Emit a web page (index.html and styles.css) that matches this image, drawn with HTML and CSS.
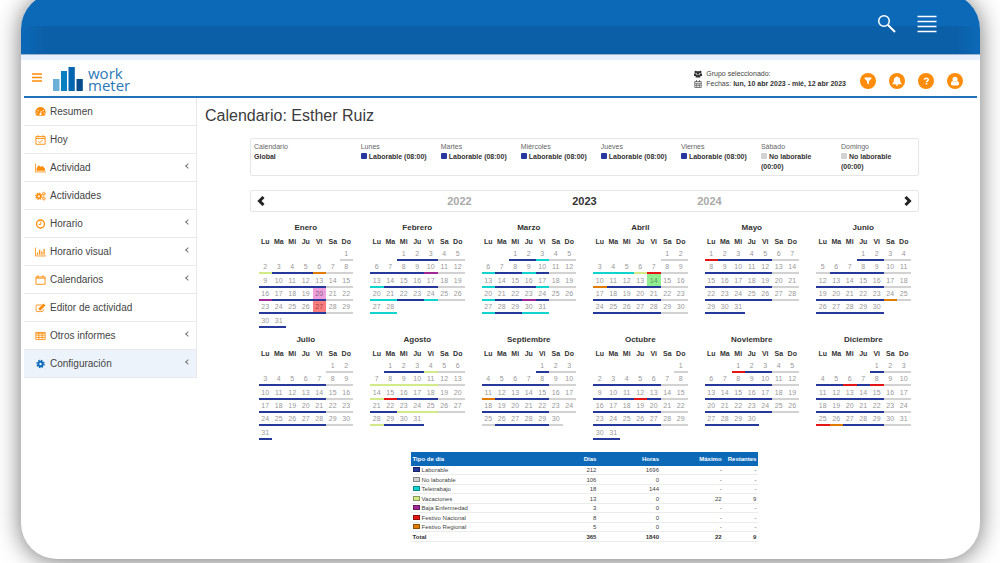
FILE: index.html
```html
<!DOCTYPE html>
<html lang="es">
<head>
<meta charset="utf-8">
<meta name="viewport" content="width=device-width, initial-scale=1">
<title>Calendario: Esther Ruiz</title>
<link rel="stylesheet" href="styles.css">
</head>
<body>
<div class="frame">
  <div class="topbar">
    <button class="top-btn" type="button" aria-label="Buscar"><svg width="20" height="20" viewBox="0 0 20 20" fill="none" stroke="#fff"><circle cx="7" cy="7" r="5.3" stroke-width="1.5"/><path d="M11 11l7 7" stroke-width="2"/></svg></button>
    <button class="top-btn" type="button" aria-label="Menú"><svg width="20" height="20" viewBox="0 0 20 20" stroke="#fff" stroke-width="1.4"><path d="M.5 2.5h19M.5 7.5h19M.5 12.5h19M.5 17.5h19"/></svg></button>
  </div>
  <div class="strip"></div>
  <div class="app">
    <header class="header">
      <button class="burger" type="button" aria-label="Mostrar menú"><svg width="10" height="9" viewBox="0 0 10 9" stroke="#ff8c0a" stroke-width="1.3"><path d="M0 1h10M0 4.500h10M0 8h10"/></svg></button>
      <a class="logo" href="#">
        <svg width="30" height="24" viewBox="0 0 30 24"><path fill="#6bb0d6" d="M0 12h6.500v12H0z"/><path fill="#077fc0" d="M8 4h6v20H8z"/><path fill="#0465b0" d="M15.500 0h6.300v24h-6.300z"/><path fill="#064b8b" d="M23.500 12h6.300v12h-6.300z"/></svg>
        <span class="logo-text"><span>work</span><span>meter</span></span>
      </a>
      <div class="context">
        <div class="context-line"><svg width="8" height="8" viewBox="0 0 16 16" fill="#333"><circle cx="3.500" cy="4" r="2.500"/><circle cx="12.500" cy="4" r="2.500"/><circle cx="8" cy="5.500" r="3.300"/><path d="M0 7h4l1 3-2 2H0zM16 7h-4l-1 3 2 2h3zM3 15c0-4 1.500-6 5-6s5 2 5 6z"/></svg><span>Grupo seleccionado:</span></div>
        <div class="context-line"><svg width="8" height="8" viewBox="0 0 16 16" fill="none" stroke="#555" stroke-width="1.500"><path d="M1.500 3h13v12h-13zM1.500 6.500h13M5 0v4M11 0v4M5.500 6.500V15M10.500 6.500V15M1.500 10.500h13"/></svg><span>Fechas: <b>lun, 10 abr 2023 - mié, 12 abr 2023</b></span></div>
      </div>
      <div class="actions">
        <button type="button" aria-label="Filtro"><svg width="8" height="8" viewBox="0 0 16 16" fill="#fff"><path d="M1 1h14v2l-5 5v7l-4-3V8L1 3z"/></svg></button>
        <button type="button" aria-label="Avisos"><svg width="10" height="10" viewBox="0 0 16 16" fill="#fff"><path d="M7 1.500a1 1 0 012 0c3 .5 4 2.500 4 5 0 3 1 4.500 2.500 5.500v1H.5v-1C2 11 3 9.500 3 6.500c0-2.500 1-4.500 4-5zM6 13.500h4a2 2 0 01-4 0z"/></svg></button>
        <button type="button" aria-label="Ayuda"><svg width="7" height="8" viewBox="0 0 12 16" fill="none" stroke="#fff" stroke-width="3"><path d="M2 5.500C2 3 4 2.500 6 2.500s3.500 1 3.500 3c0 2.500-3.500 2-3.500 5M6 12v3"/></svg></button>
        <button type="button" aria-label="Usuario"><svg width="10" height="10" viewBox="0 0 16 16" fill="#fff"><circle cx="8" cy="5" r="4"/><path d="M1.500 12.500C1.500 9.500 3 8 4.500 8 6.500 10 9.500 10 11.500 8c1.500 0 3 1.500 3 4.500 0 1.500-1 2.500-2.500 2.500H4c-1.500 0-2.500-1-2.500-2.500z"/></svg></button>
      </div>
    </header>
    <div class="body">
      <nav class="sidebar">
        <a href="#"><svg viewBox="0 0 20 16"><path fill="#ff8c0a" d="M3 15a9.500 9.500 0 1114 0z"/><path stroke="#fff" stroke-width="1.500" d="M10 12l1.500-6"/><g fill="#fff"><circle cx="10" cy="12" r="2"/><circle cx="3.500" cy="10" r="1.200"/><circle cx="5.500" cy="5.500" r="1.200"/><circle cx="15" cy="5.500" r="1.200"/><circle cx="16.500" cy="10" r="1.200"/></g></svg><span>Resumen</span></a>
        <a href="#"><svg viewBox="1 0 18 16"><path class="line" d="M2.500 2.500h15v12.500h-15zM2.500 5.500h15M6 0v3.500M14 0v3.500M6.500 10l2.500 2.500 4.500-4.500"/></svg><span>Hoy</span></a>
        <a href="#"><svg viewBox="0 0 20 16"><path class="line" d="M.8 0v15.200H20"/><path fill="#ff8c0a" d="M3 13V8l4-5 4 3 2-2 5 5v4z"/></svg><span>Actividad</span><i class="chevron"></i></a>
        <a href="#"><svg viewBox="0 0 20 16" fill="none" stroke="#ff8c0a"><circle cx="7" cy="8.500" r="3.500" stroke-width="3"/><circle cx="7" cy="8.500" r="5.700" stroke-width="2" stroke-dasharray="2.480 2"/><circle cx="16" cy="4" r="2" stroke-width="1.600"/><circle cx="16" cy="4" r="3.200" stroke-width="1.200" stroke-dasharray="1.300 1.200"/><circle cx="16" cy="12.500" r="2" stroke-width="1.600"/><circle cx="16" cy="12.500" r="3.200" stroke-width="1.200" stroke-dasharray="1.300 1.200"/></svg><span>Actividades</span></a>
        <a href="#"><svg viewBox="1 0 18 16"><circle class="line thick" cx="10" cy="8" r="6.500"/><path class="line" d="M10.500 4v4.700H7"/></svg><span>Horario</span><i class="chevron"></i></a>
        <a href="#"><svg viewBox="0 0 20 16"><path class="line" d="M.8 0v15.200H20"/><path class="line thick" d="M4.500 13V9M8.500 13V4M12.500 13V7M16.500 13V2.500"/></svg><span>Horario visual</span><i class="chevron"></i></a>
        <a href="#"><svg viewBox="1 0 18 16"><path class="line" d="M2.500 3h15v12h-15zM2.500 5h15M6 0v4M14 0v4"/></svg><span>Calendarios</span><i class="chevron"></i></a>
        <a href="#"><svg viewBox="0 0 20 16"><path class="line" d="M13 2.500H3.500c-1 0-1.500.5-1.500 1.500v9c0 1 .5 1.500 1.500 1.500h10c1 0 1.500-.5 1.500-1.500v-3"/><path fill="#ff8c0a" d="M7 8.500L15.500 0 19 3.500 10.500 12H7z"/></svg><span>Editor de actividad</span></a>
        <a href="#"><svg viewBox="0 0 20 16"><path class="line" d="M1.500 1.500h17v13h-17zM1.500 3h17M1.500 6.500h17M1.500 10.500h17M7 2v12.500M13 2v12.500"/></svg><span>Otros informes</span><i class="chevron"></i></a>
        <a href="#" class="active"><svg viewBox="0 0 20 16" fill="none" stroke="#0c69b8"><circle cx="10" cy="8" r="4" stroke-width="3.600"/><circle cx="10" cy="8" r="6.500" stroke-width="2.500" stroke-dasharray="2.800 2.305"/></svg><span>Configuración</span><i class="chevron"></i></a>
      </nav>
      <main class="main">
        <h1>Calendario: Esther Ruiz</h1>
        <div class="content">
          <dl class="week">
            <div><dt>Calendario</dt><dd>Global</dd></div>
            <div><dt>Lunes</dt><dd><i class="dot work"></i>Laborable (08:00)</dd></div>
            <div><dt>Martes</dt><dd><i class="dot work"></i>Laborable (08:00)</dd></div>
            <div><dt>Miércoles</dt><dd><i class="dot work"></i>Laborable (08:00)</dd></div>
            <div><dt>Jueves</dt><dd><i class="dot work"></i>Laborable (08:00)</dd></div>
            <div><dt>Viernes</dt><dd><i class="dot work"></i>Laborable (08:00)</dd></div>
            <div><dt>Sábado</dt><dd><i class="dot off"></i>No laborable (00:00)</dd></div>
            <div><dt>Domingo</dt><dd><i class="dot off"></i>No laborable (00:00)</dd></div>
          </dl>
          <div class="years">
            <button class="arrow" type="button" aria-label="Año anterior"><svg width="8" height="10" viewBox="0 0 8 10" fill="none" stroke="#222" stroke-width="3"><path d="M6.500 1L2.500 5l4 4"/></svg></button>
            <div class="year-list"><button type="button">2022</button><button type="button" class="current">2023</button><button type="button">2024</button></div>
            <button class="arrow" type="button" aria-label="Año siguiente"><svg width="8" height="10" viewBox="0 0 8 10" fill="none" stroke="#222" stroke-width="3"><path d="M1.500 1l4 4-4 4"/></svg></button>
          </div>
          <div class="months" id="months"></div>
          <table class="summary">
            <thead><tr><th>Tipo de día</th><th>Días</th><th>Horas</th><th>Máximo</th><th>Restantes</th></tr></thead>
            <tbody>
              <tr><td><i class="key work"></i>Laborable</td><td>212</td><td>1696</td><td>-</td><td>-</td></tr>
              <tr><td><i class="key off"></i>No laborable</td><td>106</td><td>0</td><td>-</td><td>-</td></tr>
              <tr><td><i class="key remote"></i>Teletrabajo</td><td>18</td><td>144</td><td>-</td><td>-</td></tr>
              <tr><td><i class="key holiday"></i>Vacaciones</td><td>13</td><td>0</td><td>22</td><td>9</td></tr>
              <tr><td><i class="key sick"></i>Baja Enfermedad</td><td>3</td><td>0</td><td>-</td><td>-</td></tr>
              <tr><td><i class="key national"></i>Festivo Nacional</td><td>8</td><td>0</td><td>-</td><td>-</td></tr>
              <tr><td><i class="key regional"></i>Festivo Regional</td><td>5</td><td>0</td><td>-</td><td>-</td></tr>
              <tr class="total"><td>Total</td><td>365</td><td>1840</td><td>22</td><td>9</td></tr>
            </tbody>
          </table>
        </div>
      </main>
    </div>
  </div>
</div>
<script src="calendar.js"></script>
</body>
</html>
```
FILE: calendar.js
```js
const YEAR = 2023;
const DAYS = ['Lu', 'Ma', 'Mi', 'Ju', 'Vi', 'Sa', 'Do'];
const MONTHS = [
  ['Enero', { holiday: [2], regional: [6], sick: [16] }, { 20: 'pink', 27: 'red' }],
  ['Febrero', { sick: [10], remote: [13, 20, 21, 24, 27, 28] }],
  ['Marzo', { remote: [3, 6, 9, 13, 17, 20, 27, 30, 31], sick: [23] }],
  ['Abril', { remote: [3, 4, 5], holiday: [6], national: [7], regional: [10] }, { 14: 'green' }],
  ['Mayo', { national: [1] }],
  ['Junio', { off: [5], regional: [24] }],
  ['Julio', {}],
  ['Agosto', { holiday: [4, 7, 8, 9, 10, 11, 14, 23, 24, 25, 28], national: [15] }],
  ['Septiembre', { regional: [11], off: [25] }],
  ['Octubre', { national: [12] }],
  ['Noviembre', { national: [1] }],
  ['Diciembre', { national: [6, 8, 25], regional: [26] }]
];

function monthTable(index) {
  const [name, types, marks = {}] = MONTHS[index];
  const first = (new Date(YEAR, index, 1).getDay() + 6) % 7;
  const count = new Date(YEAR, index + 1, 0).getDate();
  let rows = '';
  for (let week = 0; week < 6; week++) {
    rows += '<tr>';
    for (let d = 0; d < 7; d++) {
      const day = week * 7 + d - first + 1;
      if (day < 1 || day > count) {
        rows += '<td></td>';
        continue;
      }
      const special = Object.keys(types).find(t => types[t].includes(day));
      const type = special || (d > 4 ? 'off' : 'work');
      rows += `<td class="day ${type} ${marks[day] || ''}">${day}</td>`;
    }
    rows += '</tr>';
  }
  const head = DAYS.map(d => `<th scope="col">${d}</th>`).join('');
  return `<table class="month"><caption>${name}</caption><thead><tr>${head}</tr></thead><tbody>${rows}</tbody></table>`;
}

document.getElementById('months').innerHTML = MONTHS.map((_, i) => monthTable(i)).join('');
```
FILE: styles.css
```css
:root {
  --blue: #0c69b8;
  --orange: #ff8c0a;
}
* { box-sizing: border-box; }
body {
  margin: 0;
  background: #fff;
  color: #444;
  font: 7px/10px "Liberation Sans", Arial, sans-serif;
  overflow: hidden;
}
button { padding: 0; border: 0; background: none; font: inherit; color: inherit; cursor: pointer; }
a { color: inherit; text-decoration: none; }
svg { display: block; flex: none; }
dl, dd, h1 { margin: 0; }

.frame {
  margin: -7px 20px 4px 21px;
  min-height: calc(100vh + 3px);
  background: #fff;
  border-radius: 36px;
  box-shadow: 0 2px 24px rgba(0, 0, 0, .55);
}
.topbar {
  height: 61px;
  padding: 0 43px;
  display: flex;
  align-items: center;
  justify-content: flex-end;
  gap: 20px;
  border-radius: 36px 36px 0 0;
  background:
    linear-gradient(90deg, var(--blue), #0b5fa7 24px, #0b5fa7 calc(100% - 24px), var(--blue)) 0 33px / 100% 28px no-repeat,
    var(--blue);
}
.strip { height: 6px; background: #e7f2fe; border-top: 1px solid #9db4cc; }
.app { margin: 0 3px; }

.header {
  display: flex;
  align-items: center;
  height: 38px;
  padding: 2px 14px 0 8px;
  border-bottom: 2px solid #2173b8;
}
.burger { margin: 0 11px 4px 0; }
.logo { display: flex; align-items: center; gap: 5px; }
.logo-text {
  display: flex;
  flex-direction: column;
  color: #2a78b6;
  font: 15px/12px "Open Sans", sans-serif;
}
.context { margin-left: auto; }
.context-line { display: flex; align-items: center; gap: 4px; }
.context b { color: #333; }
.actions { display: flex; gap: 13px; margin: 4px 0 0 14px; }
.actions button {
  display: flex;
  align-items: center;
  justify-content: center;
  width: 16px;
  height: 16px;
  border-radius: 50%;
  background: var(--orange);
}

.body { display: flex; align-items: flex-start; }
.sidebar { width: 173px; border-right: 1px solid #e8e8e8; font-size: 10px; }
.sidebar a {
  display: flex;
  align-items: center;
  gap: 4px;
  height: 28px;
  padding: 0 6px 0 11px;
  border-bottom: 1px solid #e9e9e9;
}
.sidebar svg { width: 11px; height: 10px; }
.sidebar .line { fill: none; stroke: var(--orange); stroke-width: 1.5; }
.sidebar .thick { stroke-width: 2.2; }
.sidebar .active { background: #edf3fb; }
.chevron {
  width: 4px;
  height: 4px;
  margin: 0 0 4px auto;
  border: solid #777;
  border-width: 0 0 1px 1px;
  transform: rotate(45deg);
}

.main { flex: 1; padding: 8px 8px 0; }
h1 { font-size: 16px; font-weight: 400; line-height: 20px; color: #3c3c3c; }
.content { margin: 12px 50px 0 45px; }
.week {
  display: grid;
  grid-template-columns: 4fr repeat(7, 3fr);
  min-height: 38px;
  padding: 3px 0;
  border: 1px solid #e6e6e6;
  border-radius: 2px;
}
.week > div { padding: 0 8px 0 3px; }
dt { color: #666; }
dd { font-weight: 700; color: #333; }
.dot { display: inline-block; width: 6px; height: 6px; margin-right: 2px; border-radius: 1px; }
.years {
  display: flex;
  align-items: center;
  justify-content: space-between;
  height: 22px;
  margin-top: 14px;
  padding: 0 6px;
  border: 1px solid #e6e6e6;
  border-radius: 2px;
}
.year-list { display: flex; }
.year-list button { width: 125px; font-size: 11px; font-weight: 700; line-height: 14px; color: #aaa; }
.year-list .current { color: #333; }

.months {
  display: grid;
  grid-template-columns: repeat(6, 1fr);
  row-gap: 5px;
  margin-top: 9px;
}
.month {
  table-layout: fixed;
  width: calc(100% - 17px);
  margin: 0 auto;
  border-spacing: 0;
  text-align: center;
}
.month caption { font-size: 8px; font-weight: 700; line-height: 14px; color: #333; }
.month th { padding: 1px 0 0; line-height: 12px; color: #333; }
.month td { height: 13px; padding: 0; line-height: 11px; color: #999; vertical-align: bottom; }
.month tr:nth-child(3n) td { height: 14px; }
.month .day { border-bottom: 2px solid; }

.work { background-color: #26399a; }
.off { background-color: #d2d2d2; }
.remote { background-color: #12d4cf; }
.holiday { background-color: #d3ea88; }
.sick { background-color: #a02894; }
.national { background-color: #e31515; }
.regional { background-color: #e07c06; }
.day { background-color: transparent; }
.day.work { border-color: #26399a; }
.day.off { border-color: #d2d2d2; }
.day.remote { border-color: #12d4cf; }
.day.holiday { border-color: #d3ea88; }
.day.sick { border-color: #a02894; }
.day.national { border-color: #e31515; }
.day.regional { border-color: #e07c06; }
.month .pink { background-color: #f0a0dc; color: #8a6080; }
.month .red { background-color: #fb7d7d; color: #a04848; }
.month .green { background-color: #90ee90; color: #609a60; }

.summary {
  width: 52%;
  margin: 12px auto 0;
  table-layout: fixed;
  border-spacing: 0;
  font-size: 6px;
  line-height: 8px;
  text-align: right;
}
.summary th, .summary td { padding: 0 2px; white-space: nowrap; }
.summary th { height: 14px; background: var(--blue); color: #fff; }
.summary th:first-child { width: 36%; }
.summary th:nth-child(2), .summary th:nth-child(3), .summary th:nth-child(4) { width: 18%; }
.summary th:last-child { width: 10%; }
.summary th:first-child, .summary td:first-child { text-align: left; }
.summary td { height: 9px; border-bottom: 1px solid #ececec; }
.summary tr:nth-child(even) td { height: 10px; }
.summary .total { font-weight: 700; color: #333; }
.key { display: inline-block; width: 7px; height: 5px; margin-right: 2px; border: 1px solid rgba(0, 0, 0, .35); }
```
